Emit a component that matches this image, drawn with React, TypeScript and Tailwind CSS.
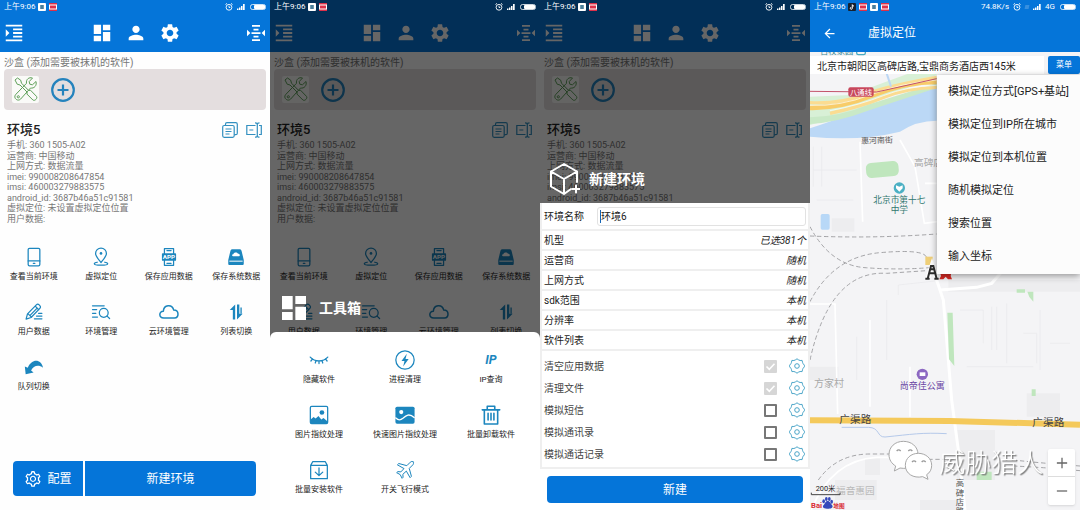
import React from "react";
import { MdDashboard, MdPerson, MdSettings, MdFormatIndentIncrease, MdArrowBack } from "react-icons/md";
import { AiOutlineSetting } from "react-icons/ai";

type Kids = { children: React.ReactNode };

/* ---------- icon drawings ---------- */

function Line({ children }: Kids) {
  return (
    <svg viewBox="0 0 24 24" className="size-full" fill="none" stroke="currentColor" strokeWidth="1.5" strokeLinecap="round" strokeLinejoin="round" aria-hidden="true">
      {children}
    </svg>
  );
}

const solid = { fill: "currentColor", stroke: "none" };

const icons = {
  phone: (
    <Line>
      <rect x="5" y="1.500" width="14" height="21" rx="1.6" />
      <path d="M5 16.800h14M11.200 19.700h1.800" />
    </Line>
  ),
  pin: (
    <Line>
      <path d="M12 18.600C8.400 14.200 5.500 11.200 5.500 7.700a6.500 6.500 0 0 1 13 0c0 3.500-2.900 6.500-6.500 10.900z" />
      <circle cx="12" cy="7.700" r="1.600" {...solid} />
      <path d="M7.500 18.300c-2 .3-3.500.9-3.500 1.700 0 1.100 3.600 1.800 8 1.800s8-.7 8-1.800c0-.8-1.500-1.400-3.500-1.700" />
    </Line>
  ),
  app: (
    <Line>
      <path d="M6.500 8V2h11v6M6.500 16v6h11v-6M9.500 4.300h5M9.500 19.500h5" />
      <rect x="3.500" y="7.500" width="17" height="9" rx="1" {...solid} />
      <text x="12" y="14.700" textAnchor="middle" fontSize="7.500" fontWeight="700" fontFamily="Roboto, sans-serif" fill="#fff" stroke="none">APP</text>
    </Line>
  ),
  disk: (
    <Line>
      <path {...solid} d="M7.800 2.800h8.400c1.300 0 2.200.8 2.500 2L21.300 15.500v4.700c0 .9-.6 1.500-1.500 1.500H4.200c-.9 0-1.500-.6-1.500-1.500v-4.700L5.300 4.800c.3-1.200 1.200-2 2.500-2z" />
      <path d="M4.500 17h15" stroke="#fff" strokeWidth="1.200" />
      <path d="M8.600 11.200c-1.800-.3-1.600-2.500.2-2.600.5-2.600 4.800-2.800 5.600-.4 2.600-.2 2.800 2.800.8 3z" fill="#fff" stroke="none" />
    </Line>
  ),
  pencil: (
    <Line>
      <path d="M2.500 20.500l1.700-6.300L14.800 3.400c1-1 2.400-1 3.400 0l.8.9c1 1 1 2.300 0 3.300L8.500 18.600zM5.300 14.500l3 3M13.500 5l4.200 4.300M7.600 15.700l7.600-7.800" />
      <path d="M17.500 13.500h4M15 16.800h6.500M12.500 20.200h9" />
    </Line>
  ),
  searchList: (
    <Line>
      <path d="M1.800 4.500h14M1.800 9h5M1.800 13.500h4M1.800 18h6" />
      <circle cx="15.300" cy="13" r="5.300" />
      <path d="M19.300 17l3 2.800" />
    </Line>
  ),
  cloud: (
    <Line>
      <path strokeWidth="1.800" d="M5.800 19.300C-.8 18.800-.2 11 5.200 11.200 5.600 2.800 15.800 2 17.700 9.700c6.800.2 6.500 9 .8 9.600z" />
    </Line>
  ),
  swap: (
    <Line>
      <path {...solid} d="M11 3v18H8.200V9.500H4.500zM13.200 3H16v11h4l-6.800 7z" />
      <path {...solid} d="M17.300 6.500h1.600V14h-1.600z" />
    </Line>
  ),
  undo: (
    <Line>
      <path {...solid} d="M1 11.500l1 9.300 9.500-2.300-3-2.400c2.600-5.200 8.500-7.500 14.300-3.300C20.900 2.800 9.800.8 4.500 13z" />
    </Line>
  ),
  eye: (
    <Line>
      <path d="M1.500 8.500c5.500 6 15.500 6 21 0M4.300 10.700l-2 2.500M8.400 12.700l-.9 2.900M12 13.200v3M15.600 12.700l.9 2.900M19.700 10.700l2 2.500" />
    </Line>
  ),
  bolt: (
    <Line>
      <circle cx="12" cy="12" r="11" />
      <path {...solid} d="M14.200 4.500l-6.400 8.700h3.600l-1.600 6.500 6.600-9h-3.800z" />
    </Line>
  ),
  ip: (
    <Line>
      <text x="12" y="17.300" textAnchor="middle" fontSize="15" fontWeight="700" fontStyle="italic" fontFamily="Roboto, sans-serif" {...solid}>IP</text>
    </Line>
  ),
  picture: (
    <Line>
      <rect x="1.600" y="1.600" width="20.800" height="20.800" rx="1.600" />
      <circle cx="15.500" cy="9" r="2.800" {...solid} />
      <path {...solid} d="M2 22v-4.500l3.500-3.200 2.500 2 3.300-3 3.500 4.200 2.600-1.800L22 19.500V22z" />
    </Line>
  ),
  pictureFill: (
    <Line>
      <rect x="0.500" y="2" width="23" height="20.500" rx="2" {...solid} />
      <circle cx="7.500" cy="8.500" r="2.500" fill="#fff" stroke="none" />
      <path d="M1 15.500c3.500 3.400 5.500 2.800 8.500.4 4-3.400 7.500-6.300 13.500-.8" stroke="#fff" strokeWidth="1.700" />
    </Line>
  ),
  trash: (
    <Line>
      <path strokeWidth="1.900" d="M1.500 5.800h21M7.500 5.500V1.500h9v4M4 6v16.800h16V6M8.500 10v8M12 10v8M15.500 10v8" />
    </Line>
  ),
  box: (
    <Line>
      <path d="M2 6.500h20v15.900H2zM2 6.500l2.600-4.700h14.800L22 6.500M12 9.500v9M7.500 14.500l4.500 4.200 4.500-4.200" />
    </Line>
  ),
  plane: (
    <Line>
      <path strokeWidth="1.200" d="M21.800 2.200c-1-.9-2.400-.5-3.400.4l-4.200 4.200-9.700-2.600-1.600 1.600 7.900 4.500-3.800 4-3.500-.4L2 15.200l4.200 2.300L8.500 22l1.200-1.300-.3-3.500 4.200-3.900 4.500 7.900 1.600-1.600-2.600-9.500 4.200-4.200c1-1 1.300-2.600.5-3.700z" />
    </Line>
  ),
};

function CenterLines() {
  return (
    <svg viewBox="0 0 18 18" className="size-[18px]" fill="#fff" aria-hidden="true">
      <path d="M5 1h8v1.700H5zM6.500 4.700h5v1.700h-5zM4.500 8.200h9v1.700h-9zM6.500 11.700h5v1.700h-5zM5 15.300h8V17H5zM0 5.800L3.400 9 0 12.300zM18 5.800L14.600 9l3.400 3.300z" />
    </svg>
  );
}

function Cog() {
  return (
    <svg viewBox="0 0 16 16" className="size-4" fill="none" stroke="currentColor" strokeWidth="1" strokeLinejoin="round" aria-hidden="true">
      <path d="M6.400 1.900L8 .8l1.600 1.100 1.500.6 2-.1.400 1.900.6 1.400L15.400 7.200v1.600l-1.300 1.500-.6 1.400-.4 1.900-2-.1-1.500.6L8 15.200l-1.600-1.100-1.500-.6-2 .1-.4-1.900-.6-1.400L.6 8.800V7.200l1.300-1.500.6-1.400.4-1.900 2 .1z" />
      <circle cx="8" cy="8" r="2.300" />
    </svg>
  );
}

function Tools() {
  return (
    <svg viewBox="0 0 27 27" className="size-[27px] rounded-[2px] bg-[#fafaf8]" fill="none" stroke="#5fa05a" strokeWidth="1" strokeLinejoin="round" aria-hidden="true">
      <path d="M3 4l2.500-2 3.200 2.200.8 3 7.200 7.300 1.800-.3 6 6.200c1.400 1.800-1.700 5-3.600 3.600l-6-6 .3-1.800L8 9l-2.800-.8z" />
      <path d="M24 5.500l-3.600 3.300-2.600-.6-.6-2.600L20.500 2c-3.600-1.200-6.700 1.500-6 5.300L4 18.200c-3.500 3.400 1.600 8 4.700 4.800L18.500 12c3.800.8 6.600-2.700 5.500-6.500z" />
      <circle cx="6.300" cy="20.800" r="1.100" />
    </svg>
  );
}

function AddCircle() {
  return (
    <svg viewBox="0 0 24 24" className="size-6" fill="none" stroke="#2583bd" strokeWidth="2.200" aria-hidden="true">
      <circle cx="12" cy="12" r="10.800" />
      <path d="M12 6.500v11M6.500 12h11" />
    </svg>
  );
}

function CopyGlyph() {
  return (
    <svg viewBox="0 0 16 16" className="size-4" fill="none" stroke="#3390c0" strokeWidth="1.200" aria-hidden="true">
      <rect x="0.700" y="3.500" width="11.500" height="11.800" rx="1.500" />
      <path d="M3.500 3.500V2.200c0-.8.6-1.500 1.500-1.500h8.800c.8 0 1.500.6 1.500 1.500v9c0 .9-.7 1.500-1.500 1.500h-1.500M3.500 7h6M3.500 9.500h6M3.500 12h4" />
    </svg>
  );
}

function RenameGlyph() {
  return (
    <svg viewBox="0 0 16 16" className="size-4" fill="none" stroke="#3390c0" strokeWidth="1.200" aria-hidden="true">
      <path d="M9.500 3.500H.8v9h8.700M3.300 8h4M13 3.500h2.300v9H13M9 .8c1.500 0 2.300.6 2.300 1.800v10.800c0 1.200-.8 1.800-2.300 1.800M13.500.8c-1.400 0-2.200.6-2.200 1.800M11.300 13.400c0 1.200.8 1.800 2.200 1.800" />
    </svg>
  );
}

function Cube() {
  return (
    <svg viewBox="0 0 32 32" className="size-8" fill="none" stroke="#fff" strokeWidth="2" strokeLinejoin="round" strokeLinecap="round" aria-hidden="true">
      <path d="M23 26L16 31 3 23.500V8.500L16 1l13 7.500V19M3 8.500L16 16l13-7.500M16 16v15M28 22.500v7M24.500 26h7" />
    </svg>
  );
}

/* ---------- status bar ---------- */

function Battery() {
  return (
    <svg viewBox="0 0 17 6" className="h-[6px] w-[17px]" aria-hidden="true">
      <rect x="1.500" y="0.500" width="15" height="5" rx="2" fill="none" stroke="#fff" strokeWidth=".8" />
      <rect x="5" y="1" width="11" height="4" rx="1" fill="#fff" />
    </svg>
  );
}

function Signal() {
  return (
    <svg viewBox="0 0 8 6" className="h-[6px] w-2" fill="#fff" aria-hidden="true">
      <path d="M0 4.500h1.500V6H0zM2 3.500h1.500V6H2zM4 2h1.500v4H4zM6 0h1.700v6H6z" />
    </svg>
  );
}

function Alarm() {
  return (
    <svg viewBox="0 0 8 8" className="size-2" fill="none" stroke="#fff" strokeWidth=".9" aria-hidden="true">
      <circle cx="4" cy="4.300" r="2.900" />
      <path d="M4 2.800v1.700h1.300M.5 1.500L2 .4M7.500 1.500L6 .4" />
    </svg>
  );
}

function RedMark() {
  return (
    <svg viewBox="0 0 8 8" className="size-2" aria-hidden="true">
      <path fill="#dc3049" d="M0 0h8v8H0z" />
      <path fill="#fff" d="M0 1.400h8v1H0zM0 5.600h8v1H0zM0 2h1v4H0zM7 2h1v4H7z" />
    </svg>
  );
}

function WhiteMark() {
  return (
    <svg viewBox="0 0 8 8" className="size-2" aria-hidden="true">
      <rect width="8" height="8" rx="1" fill="#fff" />
      <path fill="#4b7f9c" d="M2.200 2h3.600v4H2.200z" />
    </svg>
  );
}

function StatusBar({ travelling = false }: { travelling?: boolean }) {
  return (
    <div className="relative z-20 flex h-[14px] items-center justify-between px-[4px] text-[8px] leading-[14px] text-white">
      <div className="flex items-center gap-[3px]">
        <span>上午9:06</span>
        {travelling && (
          <>
            <svg viewBox="0 0 8 8" className="size-2" aria-hidden="true">
              <rect width="8" height="8" rx="1" fill="#16202e" />
              <path d="M4.300 1.500v3.800a1 1 0 1 1-1-1M4.300 1.800c.3.900.9 1.200 1.600 1.300" fill="none" stroke="#fff" />
            </svg>
            <RedMark />
          </>
        )}
        <WhiteMark />
        <RedMark />
      </div>
      <div className="flex items-center gap-[4px]">
        {travelling && <span>74.8K/s</span>}
        <Alarm />
        {travelling && <span className="h-1 w-1 -skew-x-12 bg-white/20" />}
        <Signal />
        {travelling && <span>4G</span>}
        <Battery />
      </div>
    </div>
  );
}

/* ---------- main screen ---------- */

type Action = { icon: keyof typeof icons; label: string };

const mainActions: Action[] = [
  { icon: "phone", label: "查看当前环境" },
  { icon: "pin", label: "虚拟定位" },
  { icon: "app", label: "保存应用数据" },
  { icon: "disk", label: "保存系统数据" },
  { icon: "pencil", label: "用户数据" },
  { icon: "searchList", label: "环境管理" },
  { icon: "cloud", label: "云环境管理" },
  { icon: "swap", label: "列表切换" },
  { icon: "undo", label: "队列切换" },
];

const toolActions: Action[] = [
  { icon: "eye", label: "隐藏软件" },
  { icon: "bolt", label: "进程清理" },
  { icon: "ip", label: "IP查询" },
  { icon: "picture", label: "图片指纹处理" },
  { icon: "pictureFill", label: "快速图片指纹处理" },
  { icon: "trash", label: "批量卸载软件" },
  { icon: "box", label: "批量安装软件" },
  { icon: "plane", label: "开关飞行模式" },
];

const details = [
  "手机: 360 1505-A02",
  "运营商: 中国移动",
  "上网方式: 数据流量",
  "imei: 990008208647854",
  "imsi: 460003279883575",
  "android_id: 3687b46a51c91581",
  "虚拟定位: 未设置虚拟定位位置",
  "用户数据:",
];

function ActionButton({ icon, label }: Action) {
  return (
    <button type="button" className="flex flex-col items-center gap-[2px] text-[#1c86be]">
      <span className="size-6 p-[2px]">{icons[icon]}</span>
      <span className="text-[8px] leading-[12px] whitespace-nowrap text-[#222]">{label}</span>
    </button>
  );
}

function MainScreen({ children }: { children?: React.ReactNode }) {
  return (
    <section className="relative flex min-h-[510px] flex-col overflow-hidden bg-[#fefefe]">
      <header className="bg-[#0575d9]">
        <StatusBar />
        <nav className="flex h-[38px] items-center justify-between pr-[5px] pl-[3px] text-white">
          <button type="button" aria-label="展开"><MdFormatIndentIncrease className="size-[22px]" /></button>
          <div className="flex gap-3">
            <button type="button" aria-label="工具箱"><MdDashboard className="size-[22px]" /></button>
            <button type="button" aria-label="用户"><MdPerson className="size-[22px]" /></button>
            <button type="button" aria-label="设置"><MdSettings className="size-[22px]" /></button>
          </div>
          <button type="button" aria-label="对齐"><CenterLines /></button>
        </nav>
      </header>

      <div className="px-[4px] pt-[5px]">
        <h2 className="text-[10px] leading-[12px] text-[#777]">沙盒 (添加需要被抹机的软件)</h2>
        <div className="flex items-center gap-3 rounded-[4px] bg-[#e4dedf] px-2 py-[7px]">
          <Tools />
          <button type="button" aria-label="添加软件"><AddCircle /></button>
        </div>
      </div>

      <div className="mt-3 pr-2 pl-[7px]">
        <div className="flex items-center justify-between">
          <h1 className="text-[13px] leading-4 font-medium text-[#222]">环境5</h1>
          <div className="flex gap-2">
            <button type="button" aria-label="复制"><CopyGlyph /></button>
            <button type="button" aria-label="重命名"><RenameGlyph /></button>
          </div>
        </div>
        <ul className="mt-[2px] flex h-[84px] flex-col justify-between text-[9px] leading-[10px] text-[#777]">
          {details.map((line) => <li key={line}>{line}</li>)}
        </ul>
      </div>

      <div className="mt-[21px] grid grid-cols-4 gap-y-[17px]">
        {mainActions.map((a) => <ActionButton key={a.label} {...a} />)}
      </div>

      <div className="mt-auto mr-[14px] mb-[14px] ml-[13px] flex gap-[2px] text-[12px] text-white">
        <button type="button" className="flex h-[35px] w-[70px] items-center justify-center gap-[5px] rounded-l-[4px] bg-[#0575d9]">
          <AiOutlineSetting className="size-[18px]" />
          配置
        </button>
        <button type="button" className="h-[35px] flex-1 rounded-r-[4px] bg-[#0575d9]">新建环境</button>
      </div>

      {children && (
        <>
          <div className="absolute inset-0 z-10 bg-black/60" />
          <div className="absolute inset-x-0 bottom-0 z-30">{children}</div>
        </>
      )}
    </section>
  );
}

function SheetTitle({ icon, children }: Kids & { icon: React.ReactNode }) {
  return (
    <h2 className="mb-2 flex items-center gap-[9px] pl-2 text-[14px] leading-8 font-bold text-white">
      {icon}
      {children}
    </h2>
  );
}

function ToolSheet() {
  return (
    <>
      <SheetTitle icon={<MdDashboard className="size-8" />}>工具箱</SheetTitle>
      <div className="grid grid-cols-3 gap-y-[17px] rounded-t-[6px] bg-white px-[6px] pt-4 pb-[14px]">
        {toolActions.map((a) => <ActionButton key={a.label} {...a} />)}
      </div>
    </>
  );
}

/* ---------- new environment sheet ---------- */

const options = [
  ["机型", "已选381个"],
  ["运营商", "随机"],
  ["上网方式", "随机"],
  ["sdk范围", "本机"],
  ["分辨率", "本机"],
  ["软件列表", "本机"],
];

const switches = [
  { id: "clear-data", label: "清空应用数据", locked: true },
  { id: "clear-files", label: "清理文件", locked: true },
  { id: "fake-sms", label: "模拟短信", locked: false },
  { id: "fake-contacts", label: "模拟通讯录", locked: false },
  { id: "fake-calls", label: "模拟通话记录", locked: false },
];

function NewEnvironmentSheet() {
  return (
    <>
      <SheetTitle icon={<Cube />}>新建环境</SheetTitle>
      <form className="bg-[#efefef] text-[10px] text-[#222]" onSubmit={(e) => e.preventDefault()}>
        <div className="flex flex-col gap-[2px] px-[2px] pb-[2px]">
          <div className="flex h-[26px] items-center gap-[13px] bg-white px-[2px]">
            <label htmlFor="env-name">环境名称</label>
            <div className="flex h-[19px] flex-1 items-center rounded-[3px] border border-[#e2e2e2] pl-[2px]">
              <span className="h-[13px] w-px bg-[#1565b5]" />
              <input id="env-name" type="text" defaultValue="环境6" className="w-full min-w-0 bg-transparent outline-none" />
            </div>
          </div>
          {options.map(([name, value]) => (
            <button type="button" key={name} className="flex h-[18px] items-center justify-between bg-white px-[2px]">
              <span>{name}</span>
              <span className="italic">{value}</span>
            </button>
          ))}
          <div className="bg-white pt-[4px] pr-[3px] pb-[2px] pl-[2px]">
            {switches.map((s) => (
              <div key={s.id} className="flex h-[22px] items-center text-[#444]">
                <label htmlFor={s.id} className="flex-1">{s.label}</label>
                <span className="mr-3 grid size-[13px]">
                  <input
                    id={s.id}
                    type="checkbox"
                    defaultChecked={s.locked}
                    disabled={s.locked}
                    className="peer col-start-1 row-start-1 size-[13px] appearance-none rounded-[1px] border-2 border-[#777] disabled:border-0 disabled:bg-[#d6d6d6]"
                  />
                  <svg viewBox="0 0 13 13" className="pointer-events-none invisible col-start-1 row-start-1 size-[13px] peer-checked:visible" fill="none" stroke="#fff" strokeWidth="1.600" aria-hidden="true">
                    <path d="M2.500 6.500l2.800 2.800 5.200-5.500" />
                  </svg>
                </span>
                <button type="button" aria-label={s.label + "设置"} className="text-[#4aa5c8]"><Cog /></button>
              </div>
            ))}
          </div>
        </div>
        <div className="bg-white p-[7px]">
          <button type="submit" className="h-[27px] w-full rounded-[4px] bg-[#0575d9] text-[12px] text-white">新建</button>
        </div>
      </form>
    </>
  );
}

/* ---------- map screen ---------- */

const menuItems = ["模拟定位方式[GPS+基站]", "模拟定位到IP所在城市", "模拟定位到本机位置", "随机模拟定位", "搜索位置", "输入坐标"];

function MapDrawing() {
  return (
    <svg viewBox="0 156 810 1374" preserveAspectRatio="xMinYMin slice" className="absolute inset-0 h-full w-full" fontFamily="Roboto, 'Noto Sans CJK SC', sans-serif" fill="none">
      <path fill="#f4f4f6" d="M0 156h810v1374H0z" />
      {/* blocks */}
      <g fill="#ededef">
        <path d="M65 655h68v40H65zM0 1100h85v40H0zM650 1180h100v70H650zM440 1290h115v150H440zM75 1440h125v60H75zM330 1500h120v30H330zM415 840h395v35H415zM165 1375h45v50h-45z" />
      </g>
      {/* river, parks and highways */}
      <path fill="#d8f0d6" d="M0 290L120 285 380 190V225L110 345 0 375z" />
      <path fill="#bbd8f6" d="M0 385Q70 362 120 342L380 262V362Q320 362 270 395 150 425 0 410z" />
      <path fill="#c9e9c7" d="M0 352Q90 350 180 312L380 250V264L180 330Q80 368 0 372z" />
      <path stroke="#f8cc69" strokeWidth="15" d="M0 323Q90 325 190 285T380 245" />
      <path stroke="#fbdc91" strokeWidth="10" d="M0 308Q90 312 160 285T380 232M60 340Q150 320 220 292T380 262" />
      <path stroke="#fff" strokeWidth="2" d="M0 316Q90 320 180 285T380 240M60 332Q150 315 220 287T380 256" />
      <path stroke="#c3546b" strokeWidth="3" d="M0 274L200 276 380 236" />
      <path stroke="#bcd7f4" strokeWidth="6" d="M230 220l13 40" />
      {/* streets */}
      <g stroke="#fff" strokeWidth="9">
        <path d="M380 840L400 900 425 1200 445 1350 465 1530M390 870L500 862 545 850 580 810" />
        <path strokeWidth="5" d="M0 912h75l8 330M270 420l45 80 28 170 40-5M150 425l8 240M345 550h35M180 960v260M300 1100v150M0 1540Q60 1380 200 1372H320" />
      </g>
      <g stroke="#e9e9ec" strokeWidth="2">
        <path d="M10 440v120M35 440v120M10 510h130M265 885v-30l110-12M450 930h70v100M545 920v130M560 920v130M590 910v180M640 1000h40v90M720 1030h60M690 930v180M470 1100h200M20 600h110M140 1010v130M230 900v180" />
      </g>
      <g fill="#bfe6bd">
        <rect x="168" y="486" width="98" height="45" rx="16" transform="rotate(-5 217 508)" />
        <path d="M412 938h16l5 160-16-20zM620 868h25v10h-25zM652 875h18v30l-12-14zM665 1168h12v20h-12zM500 1415h45v25h-45z" />
      </g>
      <rect x="32" y="642" width="27" height="47" rx="5" fill="#b8d8f7" />
      {/* railways */}
      <g stroke="#a5a5a8" strokeWidth="3" strokeDasharray="13 8">
        <path d="M0 708Q190 716 380 702M0 680Q60 795 165 803T370 802M0 905Q70 770 210 758T350 775M0 1080Q60 810 230 820L350 812" />
        <path d="M25 1440Q80 1362 180 1362H240M355 1378H440M610 1398Q700 1402 810 1412M610 1380Q700 1390 810 1398" />
      </g>
      <path stroke="#b5c9ea" strokeWidth="3" d="M95 1282h80c35 0 25 30 50 29 80-8 110-14 185-10" />
      <path stroke="#f4c95b" strokeWidth="18" d="M0 1261L420 1263 810 1274" />
      {/* station badge */}
      <rect x="115" y="262" width="76" height="28" rx="6" fill="#c8475c" />
      <text x="153" y="284" textAnchor="middle" fontSize="22" fill="#fff">八通线</text>
      {/* labels */}
      <text x="30" y="163" fontSize="25" fill="#3a8994">百校家园</text>
      <rect x="140" y="142" width="26" height="22" rx="5" stroke="#48abc0" strokeWidth="4" />
      <text x="153" y="430" fontSize="24" fill="#555" transform="rotate(-2 200 420)">惠河南街</text>
      <text x="312" y="499" fontSize="29" fill="#aaa">高碑店</text>
      <circle cx="268" cy="564" r="17" fill="#4cb0c4" />
      <path fill="#fff" d="M258 556l10 4 10-4v9l-10 10-10-10z" />
      <g fontSize="26" fill="#32786f" textAnchor="middle">
        <text x="268" y="609">北京市第十七</text>
        <text x="268" y="640">中学</text>
      </g>
      <circle cx="337" cy="1123" r="17" fill="#8c68c2" />
      <rect x="329" y="1117" width="17" height="11" fill="#fff" />
      <text x="337" y="1168" textAnchor="middle" fontSize="27" fill="#6a45a4">尚帝佳公寓</text>
      <text x="12" y="1160" fontSize="30" fill="#a9a9a9">方家村</text>
      <g fontSize="32" fill="#444">
        <text x="88" y="1270">广渠路</text>
        <text x="667" y="1277">广渠路</text>
      </g>
      <g fontSize="25" fill="#555" textAnchor="middle">
        <text x="450" y="1459">高</text>
        <text x="450" y="1487">碑</text>
        <text x="450" y="1515">店</text>
        <text x="450" y="1543">路</text>
      </g>
      <text x="78" y="1483" fontSize="29" fill="#b9b9b9">福音惠园</text>
      <text x="17" y="1472" fontSize="22" fill="#222">200米</text>
      <path stroke="#444" strokeWidth="3" d="M4 1478v6h86v-6" />
      {/* provider mark */}
      <g fontWeight="700" fill="#d92c35">
        <text x="3" y="1524" fontSize="23">Bai</text>
        <text x="70" y="1523" fontSize="17">地图</text>
      </g>
      <g fill="#3549bb">
        <ellipse cx="41" cy="1504" rx="4" ry="6" />
        <ellipse cx="49" cy="1497" rx="4" ry="6" />
        <ellipse cx="58" cy="1497" rx="4" ry="6" />
        <ellipse cx="65" cy="1505" rx="4" ry="6" />
        <path d="M53 1503c7 0 9 8 13 12 5 6 0 12-13 11-13 1-17-6-12-11 4-4 5-12 12-12z" />
      </g>
      {/* position marker */}
      <path fill="#efcf78" d="M346 770h22v25h-22z" />
      <path stroke="#fff" strokeWidth="14" d="M352 838l14-42 14 42" />
      <path stroke="#2d2d2d" strokeWidth="6" d="M353 836l10-38h7l10 38M346 836h13M373 836h13M357 820h19M361 808h12" />
      <path fill="#d92a24" d="M388 808h38l-4 20 4 10h-12l-7-8-7 8h-12l5-10z" />
      {/* channel watermark */}
      <g stroke="#a8a8a8" strokeWidth="3" fill="#fff">
        <path d="M280 1324c-25 0-43 17-43 40 0 15 8 27 20 34l-4 15 17-9c30 6 54-12 54-40 0-25-20-40-44-40z" />
        <path d="M325 1360c-22 0-39 15-39 36 0 25 24 40 52 34l16 8-4-14c10-6 15-16 15-28 0-21-18-36-40-36z" />
      </g>
      <path stroke="#999" strokeWidth="4" d="M260 1353q6-7 12 0M295 1353q6-7 12 0M306 1386q6-7 12 0M335 1386q6-7 12 0" />
      <text x="388" y="1416" fontSize="78" fontWeight="300" fill="#fff" className="[filter:drop-shadow(4px_4px_1px_#777)]">威胁猎人</text>
    </svg>
  );
}

function MapScreen() {
  return (
    <section className="flex min-h-[510px] flex-col overflow-hidden">
      <header className="bg-[#0575d9] text-white">
        <StatusBar travelling />
        <div className="flex h-[38px] items-center gap-[31px] pl-3">
          <button type="button" aria-label="返回"><MdArrowBack className="size-[15px]" /></button>
          <h1 className="text-[12px] leading-4">虚拟定位</h1>
        </div>
      </header>
      <div className="relative flex-1">
        <MapDrawing />
        <div className="absolute inset-x-0 top-[4px] flex items-center gap-1">
          <input type="text" aria-label="当前位置" defaultValue="北京市朝阳区高碑店路,宝鼎商务酒店西145米" className="h-[18px] min-w-0 flex-1 bg-white pl-[7px] text-[10px] text-[#222] outline-none" />
          <button type="button" className="h-[18px] w-8 rounded-[2px] bg-[#0575d9] text-[8px] text-white">菜单</button>
        </div>
        <div role="menu" className="absolute top-[23px] right-0 flex w-[143px] flex-col bg-[#fcfcfc] pt-px shadow-[0_2px_7px_rgba(0,0,0,0.4)]">
          {menuItems.map((item) => (
            <button type="button" role="menuitem" key={item} className="h-[33px] pl-[11px] text-left text-[11px] whitespace-nowrap text-[#222]">{item}</button>
          ))}
        </div>
        <div className="absolute right-[5px] bottom-[5px] flex w-[27px] flex-col divide-y divide-[#ddd] rounded-[2px] bg-white shadow-sm">
          {["M7 1v12M1 7h12", "M1 7h12"].map((d, i) => (
            <button type="button" key={d} aria-label={i ? "缩小" : "放大"} className="flex h-7 items-center justify-center">
              <svg viewBox="0 0 14 14" className="size-[12px]" stroke="#666" strokeWidth="1.500" aria-hidden="true"><path d={d} /></svg>
            </button>
          ))}
        </div>
      </div>
    </section>
  );
}

export default function App() {
  return (
    <main className="grid min-h-screen grid-cols-4 bg-white font-[Roboto,'Noto_Sans_CJK_SC',sans-serif]">
      <MainScreen />
      <MainScreen>
        <ToolSheet />
      </MainScreen>
      <MainScreen>
        <NewEnvironmentSheet />
      </MainScreen>
      <MapScreen />
    </main>
  );
}
